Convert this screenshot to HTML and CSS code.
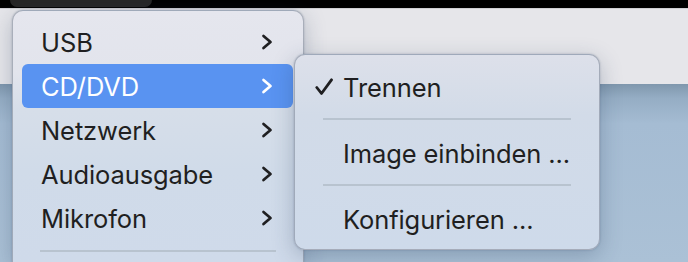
FILE: index.html
```html
<!DOCTYPE html>
<html>

<head>
  <title>Menü</title>
  <link rel="stylesheet" href="styles.css">
</head>

<body>
  <div class="topbar">
    <div class="tab"></div>
  </div>
  <div class="window">
    <div class="toolbar"></div>
    <div class="content"></div>
  </div>

  <div class="menu main-menu">
    <div class="item">
      <span class="label">USB</span>
      <svg class="chevron" viewBox="0 0 12 16"><polyline points="2.5,2 9.5,8 2.5,14"/></svg>
    </div>
    <div class="item active">
      <span class="label">CD/DVD</span>
      <svg class="chevron" viewBox="0 0 12 16"><polyline points="2.5,2 9.5,8 2.5,14"/></svg>
    </div>
    <div class="item">
      <span class="label">Netzwerk</span>
      <svg class="chevron" viewBox="0 0 12 16"><polyline points="2.5,2 9.5,8 2.5,14"/></svg>
    </div>
    <div class="item">
      <span class="label">Audioausgabe</span>
      <svg class="chevron" viewBox="0 0 12 16"><polyline points="2.5,2 9.5,8 2.5,14"/></svg>
    </div>
    <div class="item">
      <span class="label">Mikrofon</span>
      <svg class="chevron" viewBox="0 0 12 16"><polyline points="2.5,2 9.5,8 2.5,14"/></svg>
    </div>
    <div class="separator"></div>
  </div>

  <div class="menu sub-menu">
    <div class="item">
      <svg class="check" viewBox="0 0 18 18"><polyline points="1.8,9.5 6.5,15.5 16.5,1.8"/></svg>
      <span class="label">Trennen</span>
    </div>
    <div class="separator"></div>
    <div class="item">
      <span class="label">Image einbinden ...</span>
    </div>
    <div class="separator"></div>
    <div class="item">
      <span class="label">Konfigurieren ...</span>
    </div>
  </div>
</body>

</html>
```

FILE: styles.css
```css
html,
body {
  width: 688px;
  height: 262px;
  overflow: hidden;
}

body {
  margin: 0;
  font-family: Inter, "Liberation Sans", sans-serif;
  color: #1f1f21;
  background: #a7bed5;
  position: relative;
}

.topbar {
  height: 8px;
  background: #000000;
}

.tab {
  width: 142px;
  height: 7px;
  margin-left: 10px;
  background: #262626;
  border-radius: 0 0 7px 7px;
}

.window {
  display: flex;
  flex-direction: column;
  height: 254px;
}

.toolbar {
  height: 75px;
  background: #e6e6ea;
  border-top: 1px solid #cfcfd3;
}

.content {
  flex: 1;
  background: linear-gradient(#7f97ad 0, #95adc4 14px, #a5bcd3 40px, #abc1d6 100%);
}

.menu {
  position: absolute;
  box-sizing: border-box;
  border: 1px solid rgba(120, 130, 145, 0.55);
  border-radius: 11px;
  box-shadow: 0 6px 22px rgba(40, 60, 90, 0.28), 0 0 2px rgba(40, 60, 90, 0.3);
}

.main-menu {
  left: 12px;
  top: 10px;
  width: 292px;
  height: 252px;
  padding: 9px 10px 0 9px;
  border-bottom: 0;
  border-radius: 11px 11px 0 0;
  background: linear-gradient(#e5e6ee 0, #e2e4ec 62px, #d6dee9 100px, #d0dbe9 160px, #cfdaea 100%);
}

.sub-menu {
  left: 294px;
  top: 54px;
  width: 306px;
  height: 196px;
  padding: 10px 0 0;
  background: linear-gradient(#dde0ea 0, #d8dee9 28px, #d2dbe8 60px, #cedaea 100%);
  z-index: 2;
}

.item {
  height: 44px;
  display: flex;
  align-items: center;
  font-size: 25.5px;
  letter-spacing: -0.1px;
  border-radius: 6px;
}

.main-menu .item {
  padding: 0 20px 0 19px;
  justify-content: space-between;
}

.main-menu .item.active {
  background: #5993f1;
  color: #ffffff;
}

.chevron {
  width: 12px;
  height: 16px;
  fill: none;
  stroke: currentColor;
  stroke-width: 2.7;
  stroke-linecap: round;
  stroke-linejoin: round;
}

.sub-menu .item {
  padding-left: 48px;
  position: relative;
}

.check {
  position: absolute;
  left: 20px;
  top: 13px;
  width: 18px;
  height: 18px;
  fill: none;
  stroke: currentColor;
  stroke-width: 2.8;
  stroke-linecap: round;
  stroke-linejoin: round;
}

.separator {
  height: 2px;
  background: #b8c3cf;
}

.main-menu .separator {
  margin: 10px 17px 0 18px;
}

.sub-menu .separator {
  margin: 9px 28px 11px;
}
```
